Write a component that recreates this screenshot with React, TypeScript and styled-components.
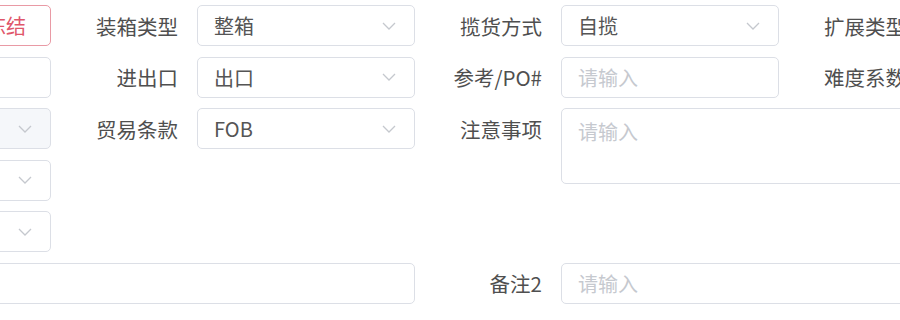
import styled, { createGlobalStyle } from "styled-components";

const GlobalStyle = createGlobalStyle`
  html, body {
    margin: 0;
    padding: 0;
    background: #ffffff;
  }
  body {
    font-family: "Noto Sans CJK SC", "Noto Sans", sans-serif;
  }
`;

const Viewport = styled.div`
  width: 900px;
  height: 320px;
  overflow: hidden;
  background: #ffffff;
`;

// the form is wider than the window; the visible crop starts inside the first column
const Form = styled.div`
  display: grid;
  grid-template-columns: repeat(4, 364px);
  grid-auto-rows: 41px;
  row-gap: 10.5px;
  width: 1456px;
  margin-left: -313px;
  padding-top: 5px;
`;

const Item = styled.div<{ col: number; row: number; colSpan?: number; rowSpan?: number; top?: boolean }>`
  grid-column: ${(p) => p.col} / span ${(p) => p.colSpan || 1};
  grid-row: ${(p) => p.row} / span ${(p) => p.rowSpan || 1};
  display: flex;
  align-items: ${(p) => (p.top ? "flex-start" : "stretch")};
  min-width: 0;
`;

const Label = styled.div`
  flex: 0 0 127px;
  padding-right: 19px;
  height: 41px;
  display: flex;
  align-items: center;
  justify-content: flex-end;
  font-size: 20.5px;
  color: #4f4f4f;
  white-space: nowrap;
`;

const Field = styled.div<{ disabled?: boolean; danger?: boolean; tall?: number }>`
  flex: 1;
  height: ${(p) => (p.tall ? `${p.tall}px` : "41px")};
  box-sizing: border-box;
  border: 1px solid ${(p) => (p.danger ? "#e99aa5" : "#dcdfe6")};
  border-radius: 5px;
  background: ${(p) => (p.disabled ? "#f5f7fa" : "#ffffff")};
  display: flex;
  align-items: ${(p) => (p.tall ? "flex-start" : "center")};
  padding: ${(p) => (p.tall ? "8px 16px" : "0 16px")};
  font-size: 20px;
  color: #555555;
  white-space: nowrap;
  overflow: hidden;
`;

const Value = styled.span<{ placeholder?: boolean; danger?: boolean }>`
  flex: 1;
  color: ${(p) => (p.danger ? "#e0566a" : p.placeholder ? "#c6c9cf" : "#555555")};
  text-align: ${(p) => (p.danger ? "right" : "left")};
  padding-right: ${(p) => (p.danger ? "8px" : "0")};
`;

const Arrow = styled.svg`
  flex: 0 0 auto;
  margin-right: 2px;
`;

function Chevron() {
  return (
    <Arrow width="14" height="8" viewBox="0 0 14 8">
      <path d="M1 1l6 6 6-6" fill="none" stroke="#c5c8ce" strokeWidth="1.3" />
    </Arrow>
  );
}

type FieldDef = {
  col: number;
  row: number;
  label?: string;
  value?: string;
  placeholder?: boolean;
  select?: boolean;
  disabled?: boolean;
  danger?: boolean;
  colSpan?: number;
  rowSpan?: number;
  tall?: number;
};

const fields: FieldDef[] = [
  { col: 1, row: 1, label: "状态", value: "已冻结", danger: true },
  { col: 2, row: 1, label: "装箱类型", value: "整箱", select: true },
  { col: 3, row: 1, label: "揽货方式", value: "自揽", select: true },
  { col: 4, row: 1, label: "扩展类型", value: "", select: true },
  { col: 1, row: 2, label: "委托编号", value: "" },
  { col: 2, row: 2, label: "进出口", value: "出口", select: true },
  { col: 3, row: 2, label: "参考/PO#", value: "请输入", placeholder: true },
  { col: 4, row: 2, label: "难度系数", value: "请输入", placeholder: true },
  { col: 1, row: 3, label: "业务类型", value: "", select: true, disabled: true },
  { col: 2, row: 3, label: "贸易条款", value: "FOB", select: true },
  { col: 3, row: 3, label: "注意事项", value: "请输入", placeholder: true, colSpan: 2, rowSpan: 2, tall: 76 },
  { col: 1, row: 4, label: "运输条款", value: "", select: true },
  { col: 1, row: 5, label: "付款方式", value: "", select: true },
  { col: 1, row: 6, label: "备注1", value: "", colSpan: 2 },
  { col: 3, row: 6, label: "备注2", value: "请输入", placeholder: true, colSpan: 2 },
];

export default function App() {
  return (
    <Viewport>
      <GlobalStyle />
      <Form>
        {fields.map((f) => (
          <Item
            key={`${f.col}_${f.row}`}
            col={f.col}
            row={f.row}
            colSpan={f.colSpan}
            rowSpan={f.rowSpan}
            top={!!f.tall}
          >
            <Label>{f.label}</Label>
            <Field disabled={f.disabled} danger={f.danger} tall={f.tall}>
              <Value placeholder={f.placeholder} danger={f.danger}>
                {f.value}
              </Value>
              {f.select && <Chevron />}
            </Field>
          </Item>
        ))}
      </Form>
    </Viewport>
  );
}
